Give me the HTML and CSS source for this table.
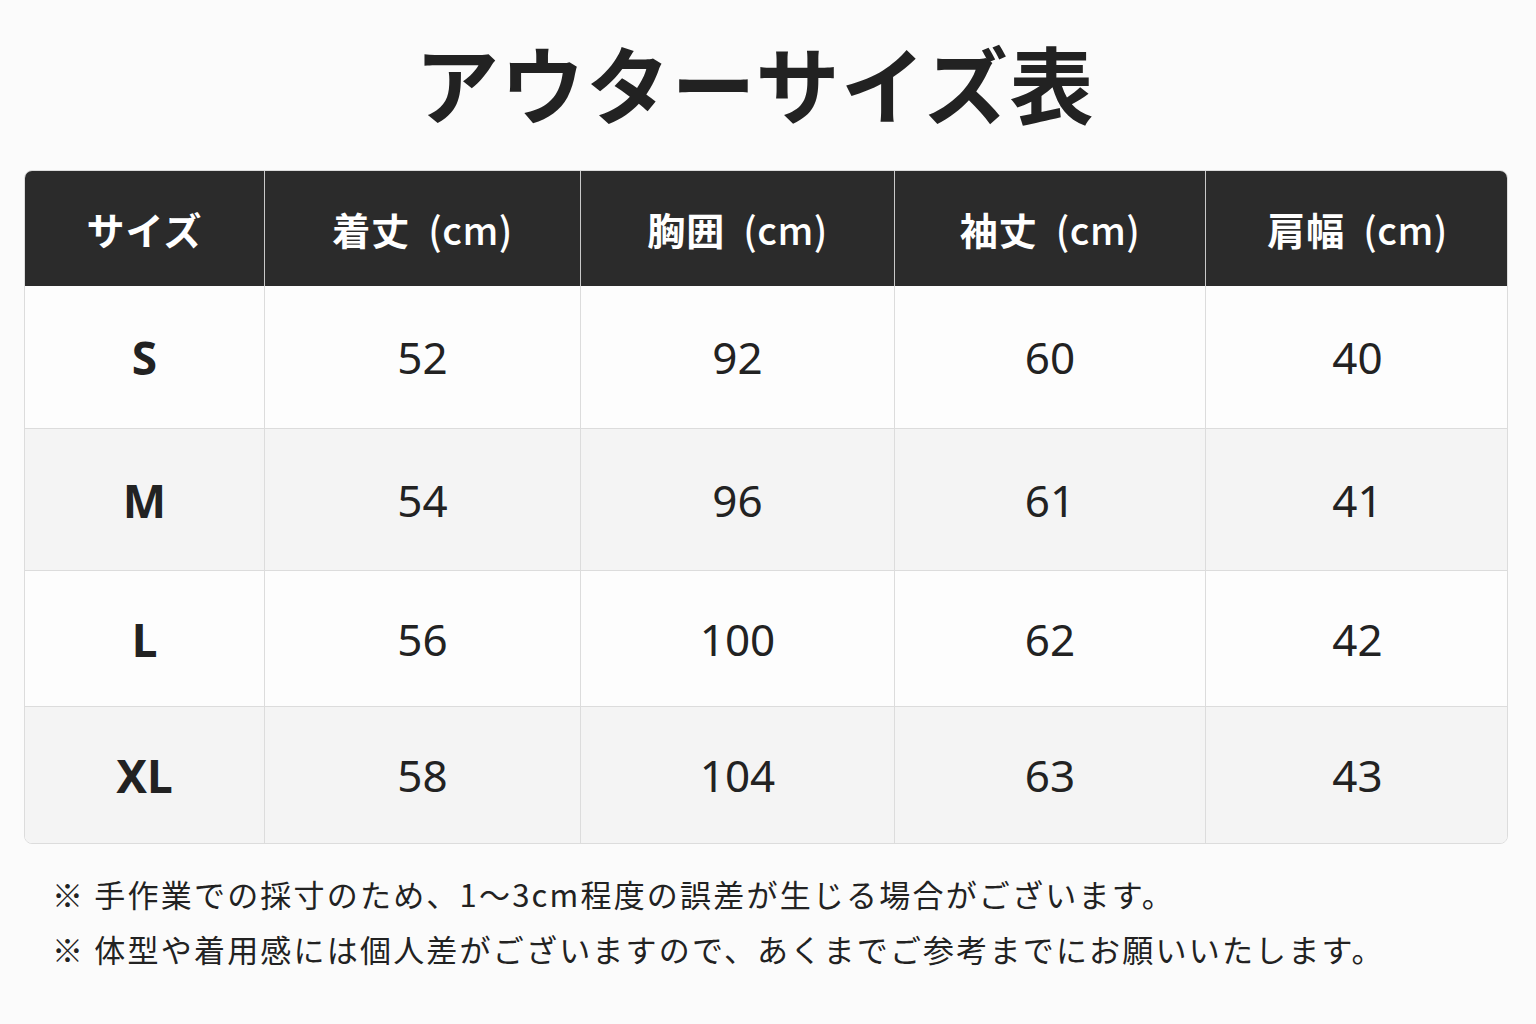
FILE: index.html
```html
<!DOCTYPE html>
<html lang="ja">
<head>
<meta charset="utf-8">
<link rel="stylesheet" href="styles.css">
</head>
<body>
<main class="page">
  <h1 class="title">アウターサイズ表</h1>
  <div class="table">
    <div class="th">サイズ</div>
    <div class="th">着丈<span class="unit">(cm)</span></div>
    <div class="th">胸囲<span class="unit">(cm)</span></div>
    <div class="th">袖丈<span class="unit">(cm)</span></div>
    <div class="th">肩幅<span class="unit">(cm)</span></div>

    <div class="td size">S</div>
    <div class="td">52</div>
    <div class="td">92</div>
    <div class="td">60</div>
    <div class="td last">40</div>

    <div class="td size alt">M</div>
    <div class="td alt">54</div>
    <div class="td alt">96</div>
    <div class="td alt">61</div>
    <div class="td alt last">41</div>

    <div class="td size">L</div>
    <div class="td">56</div>
    <div class="td">100</div>
    <div class="td">62</div>
    <div class="td last">42</div>

    <div class="td size alt bottom">XL</div>
    <div class="td alt bottom">58</div>
    <div class="td alt bottom">104</div>
    <div class="td alt bottom">63</div>
    <div class="td alt bottom last">43</div>
  </div>
  <div class="notes">
    <p>※ 手作業での採寸のため、1〜3cm程度の誤差が生じる場合がございます。</p>
    <p>※ 体型や着用感には個人差がございますので、あくまでご参考までにお願いいたします。</p>
  </div>
</main>
</body>
</html>
```

FILE: styles.css
```css
html, body {
  margin: 0;
  padding: 0;
  background: #fbfbfb;
}
body {
  font-family: "Noto Sans CJK JP", "Noto Sans", sans-serif;
  color: #222;
}
.page {
  width: 1536px;
  height: 1024px;
  padding-top: 24px;
  box-sizing: border-box;
}
.title {
  margin: 0;
  text-align: center;
  font-size: 84px;
  font-weight: 700;
  line-height: 116px;
  letter-spacing: 1.5px;
  padding-right: 26px;
  color: #222;
}
.table {
  margin: 30px 0 0 24px;
  width: 1484px;
  display: grid;
  grid-template-columns: 240px 316px 314px 311px 303px;
  grid-template-rows: 115px 143px 142px 136px 136px;
  border: 1px solid #dcdcdc;
  border-radius: 8px;
  overflow: hidden;
  box-sizing: border-box;
}
.th {
  background: #2b2b2b;
  color: #fff;
  font-size: 38px;
  font-weight: 700;
  letter-spacing: 1px;
  display: flex;
  align-items: center;
  justify-content: center;
  border-right: 1px solid #c9c9c9;
}
.th .unit {
  margin-left: 18px;
  letter-spacing: 0.5px;
  font-weight: 500;
}
.th:nth-child(5) {
  border-right: none;
}
.td {
  background: #fdfdfd;
  display: flex;
  align-items: center;
  justify-content: center;
  font-family: "Noto Sans", "Noto Sans CJK JP", sans-serif;
  font-size: 44px;
  font-weight: 400;
  color: #222;
  border-right: 1px solid #dcdcdc;
  border-bottom: 1px solid #dcdcdc;
}
.td.alt {
  background: #f4f4f4;
}
.td.last {
  border-right: none;
}
.td.bottom {
  border-bottom: none;
}
.td.size {
  font-weight: 700;
  font-size: 46px;
}
.notes {
  margin: 22px 0 0 52px;
}
.notes p {
  margin: 0;
  font-size: 31px;
  line-height: 55px;
  letter-spacing: 2.2px;
  color: #222;
}
```
